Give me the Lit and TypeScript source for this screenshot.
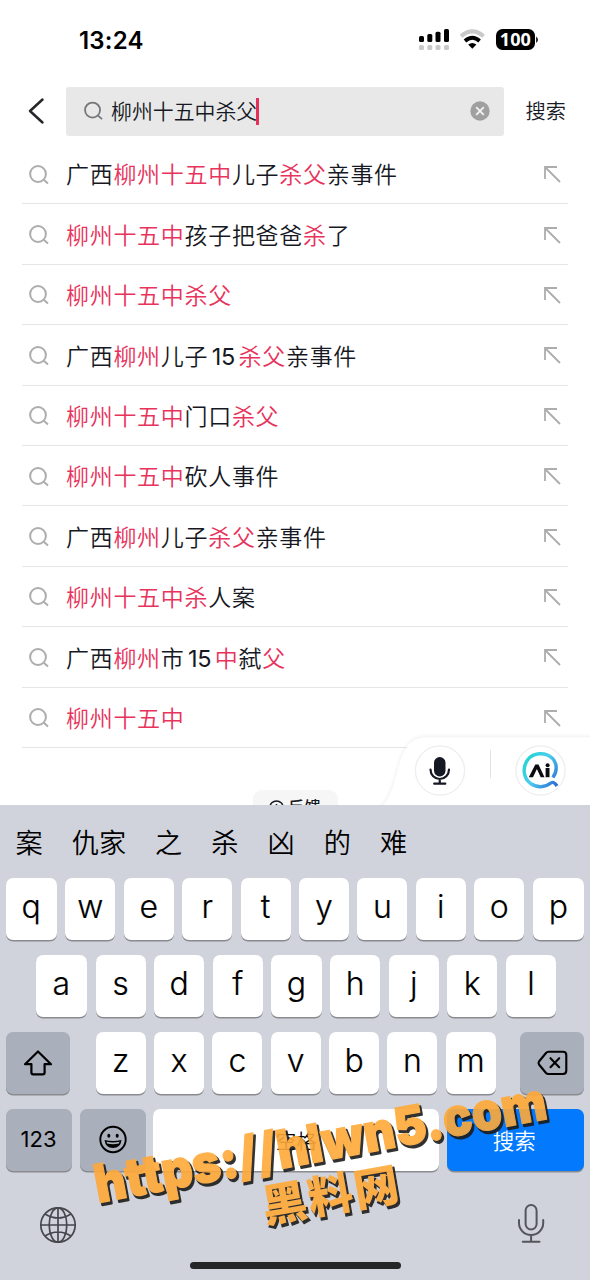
import { LitElement, html, css, svg } from "lit";
import { customElement, property } from "lit/decorators.js";

type Part = [text: string, hit?: boolean];

const SUGGESTIONS: Part[][] = [
  [["广西"], ["柳州十五中", true], ["儿子"], ["杀父", true], ["亲事件"]],
  [["柳州十五中", true], ["孩子把爸爸"], ["杀", true], ["了"]],
  [["柳州十五中杀父", true]],
  [["广西"], ["柳州", true], ["儿子"], ["15"], ["杀父", true], ["亲事件"]],
  [["柳州十五中", true], ["门口"], ["杀父", true]],
  [["柳州十五中", true], ["砍人事件"]],
  [["广西"], ["柳州", true], ["儿子"], ["杀父", true], ["亲事件"]],
  [["柳州十五中杀", true], ["人案"]],
  [["广西"], ["柳州", true], ["市"], ["15"], ["中", true], ["弑"], ["父", true]],
  [["柳州十五中", true]],
];

const magnifier = svg`<circle cx="9" cy="9" r="7.9"/><path d="M14.8 14.8L19 18.6"/>`;

@customElement("status-bar")
class StatusBar extends LitElement {
  static styles = css`
    :host { display: flex; height: 86px; box-sizing: border-box; padding: 0 51px 6px 79px; align-items: center; justify-content: space-between; }
    .time { font: 600 24px/1 Inter, sans-serif; letter-spacing: 0.2px; color: #000; padding-top: 1px; }
    .icons { display: block; }
    .pct { font: 700 18.500px "Noto Sans", sans-serif; fill: #fff; }
  `;
  render() {
    return html`
      <span class="time">13:24</span>
      <svg class="icons" width="121" height="24" viewBox="418 28 121 24">
        <g fill="#000">
          <rect x="419" y="36" width="5" height="6" rx="1.5"/>
          <rect x="427.3" y="34" width="5" height="8" rx="1.5"/>
          <rect x="435.5" y="31.7" width="5" height="10.3" rx="1.5"/>
          <rect x="444" y="29" width="5" height="13" rx="1.5"/>
        </g>
        <g fill="#c9c9c9">
          <rect x="419" y="45" width="5" height="5" rx="1.6"/>
          <rect x="427.3" y="45" width="5" height="5" rx="1.6"/>
          <rect x="435.5" y="45" width="5" height="5" rx="1.6"/>
          <rect x="444" y="45" width="5" height="5" rx="1.6"/>
        </g>
        <path d="M461 36.2Q472.3 26.5 483.600 36.2" fill="none" stroke="#c9c9c9" stroke-width="4"/>
        <path d="M465 41Q472.300 34.600 479.600 41" fill="none" stroke="#000" stroke-width="3.800"/>
        <path d="M468.200 44.600Q472.300 41.300 476.400 44.600L472.300 48.800Z" fill="#000"/>
        <rect x="496" y="29" width="39" height="21" rx="6.500" fill="#000"/>
        <path d="M536.200 36.500a4 4 0 0 1 0 6.500z" fill="#000"/>
        <text class="pct" x="515.300" y="46.200" text-anchor="middle" textLength="31" lengthAdjust="spacingAndGlyphs">100</text>
      </svg>`;
  }
}

@customElement("search-header")
class SearchHeader extends LitElement {
  static styles = css`
    :host { display: flex; height: 58px; box-sizing: border-box; padding: 0.5px 24px 8px 28px; align-items: stretch; }
    .back { width: 38px; display: flex; align-items: center; }
    .field { width: 437.5px; box-sizing: border-box; padding: 0 14px 0 18px; background: #e8e8e8; border-radius: 3px; display: flex; align-items: center; }
    .query { margin-left: 8px; font-size: 20.900px; line-height: 30px; color: #161823; white-space: nowrap; padding-bottom: 2px; }
    .caret { width: 2.500px; height: 27px; background: #e6305a; margin-left: -1px; }
    .clear { margin-left: auto; }
    .go { margin-left: auto; font-size: 20.200px; color: #161823; align-self: center; line-height: 30px; }
  `;
  render() {
    return html`
      <div class="back">
        <svg width="17" height="28" viewBox="0 0 17 28" fill="none" stroke="#26262b" stroke-width="2.500" stroke-linecap="round" stroke-linejoin="round"><path d="M14.500 2.500L2 14L14.500 25.500"/></svg>
      </div>
      <div class="field">
        <svg width="19" height="20" viewBox="0 0 20 20" fill="none" stroke="#77777b" stroke-width="1.900">${magnifier}</svg>
        <span class="query">柳州十五中杀父</span><span class="caret"></span>
        <svg class="clear" width="20" height="20" viewBox="0 0 20 20"><circle cx="10" cy="10" r="9.700" fill="#a0a0a0"/><path d="M6.200 6.200L13.800 13.800M13.800 6.200L6.200 13.800" stroke="#f2f2f2" stroke-width="1.900"/></svg>
      </div>
      <span class="go">搜索</span>`;
  }
}

@customElement("suggest-row")
class SuggestRow extends LitElement {
  @property({ attribute: false }) parts: Part[] = [];
  static styles = css`
    :host { display: flex; height: 60.400px; box-sizing: border-box; margin: 0 22px; padding: 2px 7px 0 6.500px; border-bottom: 1.300px solid #e6e6e7; align-items: center; }
    .label { margin-left: 17.500px; font-size: 23px; letter-spacing: 0.700px; color: #161823; white-space: pre; line-height: 34px; padding-bottom: 2.500px; }
    .hit { color: #e8335c; }
    .num { font: 400 23.500px/30px Inter, sans-serif; letter-spacing: -0.300px; margin: 0 3.600px 0 3.500px; }
    .fill { margin-left: auto; }
  `;
  render() {
    return html`
      <svg width="20" height="20" viewBox="0 0 20 20" fill="none" stroke="#adadaf" stroke-width="2">${magnifier}</svg>
      <span class="label">${this.parts.map(([t, hit]) => html`<span class=${hit ? "hit" : t === "15" ? "num" : ""}>${t}</span>`)}</span>
      <svg class="fill" width="17" height="17" viewBox="0 0 17 17" fill="none" stroke="#adadaf" stroke-width="1.800"><path d="M1 13V1H13M1 1L16 16"/></svg>`;
  }
}

@customElement("voice-dock")
class VoiceDock extends LitElement {
  static styles = css`
    :host { display: block; }
    .shape { display: block; }
  `;
  render() {
    return html`
      <svg class="shape" width="220" height="79" viewBox="370 726 220 79">
        <defs>
          <filter id="s" x="-10%" y="-20%" width="120%" height="140%"><feDropShadow dx="0" dy="-0.500" stdDeviation="2.200" flood-color="#000" flood-opacity="0.090"/></filter>
          <linearGradient id="g" x1="0" y1="0.200" x2="1" y2="0.900"><stop offset="0" stop-color="#27d3d3"/><stop offset="0.450" stop-color="#4ccdf0"/><stop offset="1" stop-color="#2d6fd6"/></linearGradient>
        </defs>
        <path d="M374 812C390 804 392 790 398 770C404 750 408 737.500 428 737.500H600V812Z" fill="#fff" filter="url(#s)"/>
        <g fill="#fff" stroke="#eeeeef" stroke-width="1.300"><circle cx="440" cy="770.500" r="24.600"/><circle cx="540.500" cy="770.500" r="24.600"/></g>
        <path d="M490.500 750V778" stroke="#e3e3e5" stroke-width="1"/>
        <rect x="434" y="757" width="11.500" height="19.500" rx="5.700" fill="#161823"/>
        <path d="M430.500 769.500a9.250 9.500 0 0 0 18.500 0M439.750 779.500V783.500M434.200 783.700H445.300" fill="none" stroke="#161823" stroke-width="2.200" stroke-linecap="round"/>
        <path d="M552.800 777.500C557 772 557.800 764 552.300 758.200C545 751.500 533 752.500 527.500 760C522 768 523.500 778 530.500 783.500C537 788 545 787.500 550 783.500C552.500 781.500 554.500 782 557 786" fill="none" stroke="url(#g)" stroke-width="3.400"/>
        <path d="M528.800 777.200L535.300 764.500H538.500L544.500 777.200H540.700L536.900 769L533 777.200Z" fill="#0b0b10"/>
        <path d="M545.600 768H549.500V777.200H545.600Z" fill="#0b0b10"/><circle cx="547.600" cy="765.200" r="2" fill="#0b0b10"/>
      </svg>`;
  }
}

@customElement("soft-keyboard")
class SoftKeyboard extends LitElement {
  static styles = css`
    :host { display: flex; flex-direction: column; height: 475px; background: #d0d3db; color: #000; }
    .cands { display: flex; gap: 29px; height: 73px; box-sizing: border-box; padding: 0 15.500px 2px; align-items: center; font-size: 27.200px; line-height: 40px; white-space: nowrap; }
    .rows { display: flex; flex-direction: column; gap: 14.700px; padding: 0 6px 0 5.500px; }
    .row { display: flex; gap: 8.400px; height: 62.200px; }
    .row.mid { padding: 0 28px 0 30px; }
    .key { flex: 1 1 0; display: flex; align-items: center; justify-content: center; box-sizing: border-box; background: #fff; border-radius: 7px; box-shadow: 0 1.500px 0 #898b90; }
    .letter { font: 300 32px/40px Inter, sans-serif; padding-bottom: 4px; -webkit-text-stroke: 0.200px #000; }
    .letter.wide { flex-grow: 1.028; }
    .grey { background: #a9afbb; }
    .side { flex: none; width: 64.500px; }
    .letters { display: flex; flex: 1; gap: 8.400px; padding: 0 15.300px 0 17.200px; }
    .fn { flex: none; width: 66.200px; }
    .num { font: 400 22px/30px Inter, sans-serif; padding-bottom: 1px; }
    .space { flex: none; width: 286px; font-size: 20.500px; margin-left: -1.500px; }
    .go { background: #037afe; color: #fff; font-size: 21.500px; padding-right: 2px; margin-left: -1px; }
    .foot { display: flex; justify-content: space-between; padding: 32px 44px 0 39px; }
    .globe { margin-top: -1px; }
    .home { width: 211px; height: 7px; border-radius: 4px; background: #262629; margin: auto 189.500px 11px; }
  `;
  private letters(s: string) {
    return [...s].map((c) => html`<div class="key letter ${"qap".includes(c) ? "wide" : ""}">${c}</div>`);
  }
  render() {
    return html`
      <div class="cands">${["案", "仇家", "之", "杀", "凶", "的", "难"].map((c) => html`<span>${c}</span>`)}</div>
      <div class="rows">
        <div class="row">${this.letters("qwertyuiop")}</div>
        <div class="row mid">${this.letters("asdfghjkl")}</div>
        <div class="row">
          <div class="key grey side"><svg width="32" height="28" viewBox="0 0 32 28" fill="none" stroke="#000" stroke-width="2.200" stroke-linejoin="round"><path d="M16 2.500L29 15.200H22.600V23.500Q22.600 25.300 20.800 25.300H11.200Q9.400 25.300 9.400 23.500V15.200H3Z"/></svg></div>
          <div class="letters">${this.letters("zxcvbnm")}</div>
          <div class="key grey side"><svg width="32" height="26" viewBox="0 0 32 26" fill="none" stroke="#000" stroke-width="2.100" stroke-linejoin="round" stroke-linecap="round"><path d="M12.500 1.800H27Q30.300 1.800 30.300 5V20.500Q30.300 24 27 24H12.500Q11 24 10 23L3 14.500Q2 13 3 11.500L10 3Q11 1.800 12.500 1.800ZM14.500 8.200L23.200 17.200M23.200 8.200L14.500 17.200"/></svg></div>
        </div>
        <div class="row">
          <div class="key grey fn num">123</div>
          <div class="key grey fn"><svg width="30" height="30" viewBox="0 0 30 30"><circle cx="15" cy="14.500" r="12.700" fill="none" stroke="#000" stroke-width="1.900"/><ellipse cx="10.800" cy="10.800" rx="1.500" ry="2" fill="#000"/><ellipse cx="19.200" cy="10.800" rx="1.500" ry="2" fill="#000"/><path d="M6.500 15Q15 17 23.500 15Q22.500 23 15 23Q7.500 23 6.500 15Z" fill="#000"/><path d="M8.500 16.800Q15 18.400 21.500 16.800L20.900 18.500Q15 19.800 9.100 18.500Z" fill="#a9afbb"/></svg></div>
          <div class="key space">空格</div>
          <div class="key go">搜索</div>
        </div>
      </div>
      <div class="foot">
        <svg class="globe" width="38" height="42" viewBox="0 0 38 42" fill="none" stroke="#45474d" stroke-width="1.700"><circle cx="19" cy="23" r="17.200"/><ellipse cx="19" cy="23" rx="8.800" ry="17.200"/><path d="M19 5.800V40.200M1.800 23H36.200M6 12Q19 20 32 12M6 34Q19 26 32 34"/></svg>
        <svg width="30" height="42" viewBox="0 0 30 42" fill="none" stroke="#54565c" stroke-width="2" stroke-linecap="round"><rect x="9.600" y="2" width="11" height="24.500" rx="5.500"/><path d="M3 17V20a12.100 12 0 0 0 24.200 0V17M15.100 32.200V38.800M6.800 38.800H23.500"/></svg>
      </div>
      <div class="home"></div>`;
  }
}

@customElement("app-root")
class AppRoot extends LitElement {
  static styles = css`
    :host { display: block; position: relative; width: 590px; height: 1280px; overflow: hidden; background: #fff; font-family: "Noto Sans CJK SC", sans-serif; font-weight: 350; }
    .content { position: relative; height: 805px; overflow: hidden; display: flex; flex-direction: column; }
    .content > * { flex: none; }
    .feedback { align-self: center; margin-top: 42.500px; height: 34px; width: 85px; box-sizing: border-box; border-radius: 9px; background: #f6f6f7; display: flex; align-items: center; justify-content: center; gap: 4px; font-size: 16.500px; font-weight: 500; color: #161823; }
    .dock { position: absolute; right: 0; bottom: 0; }
    .stamp { position: absolute; left: 0; top: 1060px; pointer-events: none; opacity: 0.900; }
    .url { font: 900 53px Inter, sans-serif; }
    .cn { font: 900 45px "Noto Sans CJK SC", sans-serif; }
    .shade { fill: #1c1c1c; stroke: #1c1c1c; stroke-width: 2.400px; stroke-linejoin: round; }
    .face { fill: #ffa938; stroke: #ffa938; stroke-width: 1.200px; stroke-linejoin: round; }
    .face .cn { stroke-width: 0; }
    .shade .cn { stroke-width: 1.200px; }
  `;
  render() {
    return html`
      <div class="content">
        <status-bar></status-bar>
        <search-header></search-header>
        ${SUGGESTIONS.map((p) => html`<suggest-row .parts=${p}></suggest-row>`)}
        <div class="feedback"><svg width="15" height="15" viewBox="0 0 15 15" fill="none" stroke="#161823" stroke-width="1.500"><circle cx="7.500" cy="7.500" r="6.600"/><path d="M7.500 4V8M7.500 9.500V11"/></svg>反馈</div>
        <voice-dock class="dock"></voice-dock>
      </div>
      <soft-keyboard></soft-keyboard>
      <svg class="stamp" width="590" height="190" viewBox="0 1060 590 190">
        ${(["shade", "face"] as const).map((k) => svg`
          <g class=${k} transform=${k === "shade" ? "translate(2 2.500)" : ""}>
            <text class="url" transform="translate(98 1203) rotate(-10.600)" textLength="459" lengthAdjust="spacingAndGlyphs">https://hlwn5.com</text>
            <text class="cn" transform="translate(265 1223) rotate(-9.800)" textLength="138">黑料网</text>
          </g>`)}
      </svg>`;
  }
}
